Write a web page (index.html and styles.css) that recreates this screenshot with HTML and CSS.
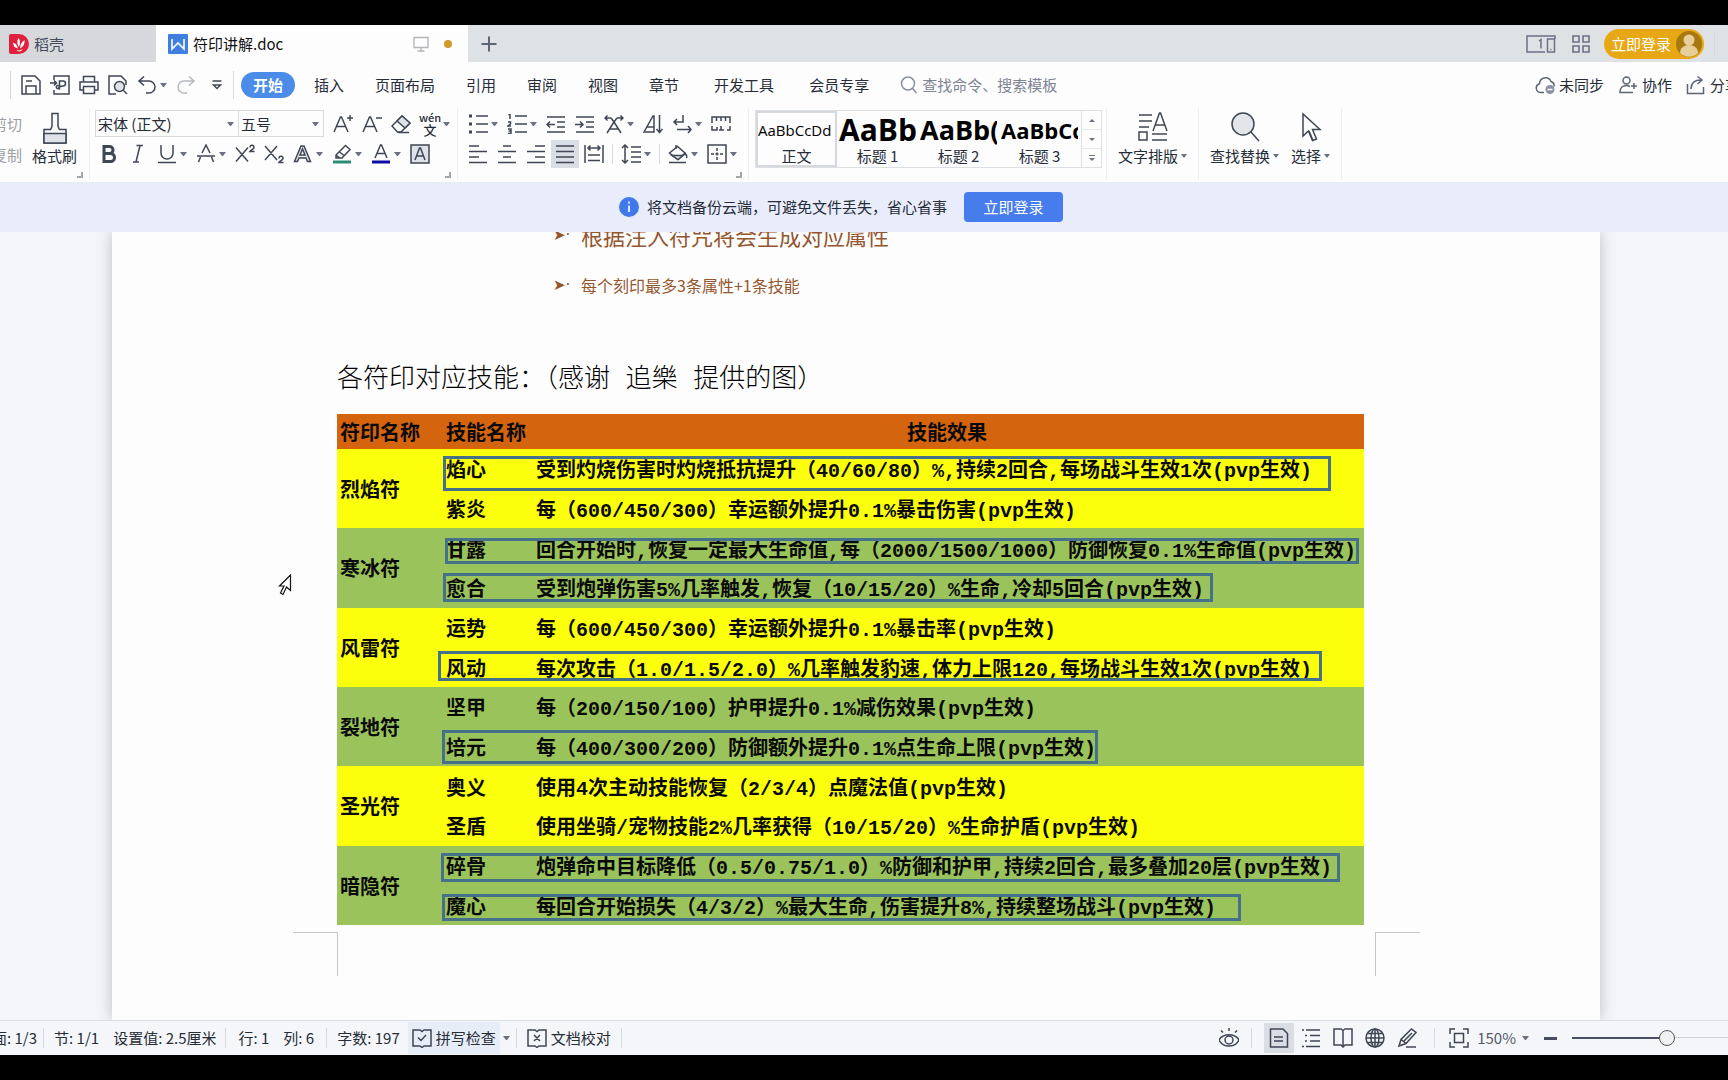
FILE: index.html
```html
<!DOCTYPE html>
<html lang="zh-CN">
<head>
<meta charset="utf-8">
<title>符印讲解.doc</title>
<meta name="viewport" content="width=device-width, initial-scale=1">
<link rel="stylesheet" href="styles.css">
</head>
<body>
<div class="app">

  <header class="tabbar">
    <button class="tab tab-home" type="button">
      <svg class="i20" viewBox="0 0 20 20"><path d="M0 2q0-2 2-2h8a10 10 0 0 1 0 20H2q-2 0-2-2z" fill="#e0203c"/><path d="M9.500 4c2 2.500 2 6 .2 9C8 10 7.800 6.500 9.500 4zM15.500 6c.5 4-1.500 7-4.500 8.500 0-3.500 1.500-6.500 4.500-8.500zM4 8.500c2.500.8 4.300 2.800 4.800 6C6 14 4.200 12 4 8.500zM7.500 16c2 .8 4.500.4 6.500-1-1.500 2.500-5 3.500-6.500 1z" fill="#fff"/></svg>
      <span>稻壳</span>
    </button>
    <button class="tab tab-doc" type="button">
      <svg class="i20" viewBox="0 0 20 20"><rect width="20" height="20" rx="1" fill="#3f7fe0"/><path d="M4 5v10l6-6 6 6V5" fill="none" stroke="#fff" stroke-width="1.600"/></svg>
      <span class="tab-name">符印讲解.doc</span>
      <svg class="i16" viewBox="0 0 16 16" fill="none" stroke="#b4b6bb" stroke-width="1.400"><path d="M1 1.500h14v10H1zM8 11.500v3M4.500 15h7"/></svg>
      <i class="dot"></i>
    </button>
    <button class="plain add" type="button" aria-label="新建"><svg class="i16" viewBox="0 0 16 16"><path d="M8 .5v15M.5 8h15"/></svg></button>
    <div class="tabbar-end">
      <svg width="30" height="18" viewBox="0 0 30 18" fill="none" stroke="#6b7286" stroke-width="1.500"><path d="M19 17H1V1h28v3M28.500 4h-7v13h7zM24.500 14.500h1M13 6l2-1.500v9"/></svg>
      <svg class="i18" viewBox="0 0 18 18" fill="none" stroke="#6b7286" stroke-width="1.600"><path d="M1 1h6v6H1zM11 1h6v6h-6zM1 11h6v6H1zM11 11h6v6h-6z"/></svg>
      <button class="login-pill" type="button">立即登录
        <svg width="26" height="26" viewBox="0 0 26 26"><circle cx="13" cy="13" r="13" fill="#a8780c"/><circle cx="13" cy="9" r="5.500" fill="#e6cf9a"/><path d="M4 22c0-5 4-8 9-8s9 3 9 8c-5 5-13 5-18 0z" fill="#e6cf9a"/></svg>
      </button>
      <i class="vline"></i>
    </div>
  </header>

  <nav class="menubar">
    <i class="vline v28"></i>
    <div class="quick">
      <button class="plain" aria-label="保存"><svg class="i20" viewBox="0 0 20 20"><path d="M1 1h13l5 5v13H1zM5 19v-8h10v8M5 6h6"/></svg></button>
      <button class="plain" aria-label="输出为PDF"><svg class="i20" viewBox="0 0 20 20"><path d="M4 5V1h15v18H4v-4M0 8h6M4 5.500 6.500 8 4 10.500M9.500 14.500V6H13a2.500 2.500 0 0 1 0 5c-3 0-4 1-4.500 2.500a1.600 1.600 0 1 1 1-1.500"/></svg></button>
      <button class="plain" aria-label="打印"><svg class="i20" viewBox="0 0 20 20"><path d="M4.500 7V1.500h11V7M4.500 15H1V7h18v8h-3.500M4.500 11.500h11v7h-11z"/></svg></button>
      <button class="plain" aria-label="打印预览"><svg class="i20" viewBox="0 0 20 20"><path d="M8 19H1V1h12l5 5v4"/><circle cx="11.500" cy="11.500" r="5" fill="#dfe2e8"/><path d="m15 15 4 4"/></svg></button>
      <button class="plain split" aria-label="撤消"><svg class="i20" viewBox="0 0 20 20"><path d="M7 1.500 2 6l5 4.500M2.500 6H12a6 6 0 0 1 0 12H9"/></svg></button>
      <button class="plain pale" aria-label="恢复"><svg class="i20" viewBox="0 0 20 20"><path d="m13 1.500 5 4.500-5 4.500M17.500 6H8a6 6 0 0 0 0 12h3"/></svg></button>
      <button class="plain" aria-label="自定义快速访问"><svg class="i20" viewBox="0 0 20 20"><path d="M5.500 6h9M6.500 10l3.500 3.500 3.500-3.500z"/></svg></button>
    </div>
    <i class="vline v28"></i>
    <button class="menu current" type="button">开始</button>
    <div class="menus">
      <button class="menu" type="button">插入</button>
      <button class="menu" type="button">页面布局</button>
      <button class="menu" type="button">引用</button>
      <button class="menu" type="button">审阅</button>
      <button class="menu" type="button">视图</button>
      <button class="menu" type="button">章节</button>
      <button class="menu wide" type="button">开发工具</button>
      <button class="menu wide" type="button">会员专享</button>
    </div>
    <label class="search">
      <svg class="i18" viewBox="0 0 18 18"><circle cx="8" cy="7.500" r="6.500"/><path d="m12.500 12.500 4 4.500"/></svg>
      <input type="text" placeholder="查找命令、搜索模板" aria-label="查找命令、搜索模板">
    </label>
    <div class="menubar-end">
      <button class="plain act"><svg class="i20" viewBox="0 0 20 20"><path d="M9 17.500H5.500a4.500 4.500 0 0 1-1-8.800A6 6 0 0 1 16 6.500a4.500 4.500 0 0 1 3 5"/><circle cx="15" cy="14.500" r="4.500" fill="#8b90a3" stroke="none"/><path d="M12.500 14.500h5" stroke="#fff"/></svg>未同步</button>
      <button class="plain act"><svg class="i20" viewBox="0 0 20 20"><circle cx="8.500" cy="5.500" r="3.500"/><path d="M12 11.500c-4-2-10-1-10 6h13M13 11h6M16 8v6"/></svg>协作</button>
      <button class="plain act"><svg class="i20" viewBox="0 0 20 20"><path d="M1.500 9v9.500h16V12M5 14c0-6 4-9 10-9M11.500 1.500 16 5l-4.500 4"/></svg>分享</button>
    </div>
  </nav>

  <section class="ribbon">
    <div class="group clip">
      <div class="clip-words"><button class="plain">剪切</button><button class="plain">复制</button></div>
      <button class="plain big"><svg width="24" height="32" viewBox="0 0 24 32"><path d="M9 1.500h6v13l1.500 3H23V31H1V17.500h6.500l1.500-3z"/><path d="M1 21.500h22V31H1z" fill="#dfe2e8"/></svg>格式刷</button>
      <i class="corner"></i>
    </div>

    <div class="group font">
      <div class="row">
        <div class="fontbox">
          <button class="combo combo-face" type="button">宋体 (正文)</button>
          <button class="combo combo-size" type="button">五号</button>
        </div>
        <button class="plain" aria-label="增大字号"><svg class="i20" viewBox="0 0 20 20"><path d="M1 18 7.500 3h1L15 18M3.500 12.500h9M14 4h6M17 1v6"/></svg></button>
        <button class="plain" aria-label="减小字号"><svg class="i20" viewBox="0 0 20 20"><path d="M1 18 7.500 3h1L15 18M3.500 12.500h9M14 4h6"/></svg></button>
        <button class="plain" aria-label="清除格式"><svg class="i20" viewBox="0 0 20 20"><path d="m1 12 10-10 8 7-9 9H6.500z"/><path d="m6 7 5-5 8 7-5 5z" fill="#dfe2e8"/><path d="M7 18.500h11"/></svg></button>
        <button class="plain split pinyin" aria-label="拼音指南"><span><small>wén</small><b>文</b></span></button>
      </div>
      <div class="row">
        <button class="plain" aria-label="加粗"><svg class="i20" viewBox="0 0 20 20"><path d="M5 2.500h5.500a3.500 3.500 0 0 1 0 7H5zM5 9.500h6.500a4 4 0 0 1 0 8H5z" stroke-width="3"/></svg></button>
        <button class="plain" aria-label="倾斜"><svg class="i20" viewBox="0 0 20 20"><path d="M8.500 1.500H15M5 18h6M12 1.500 8 18"/></svg></button>
        <button class="plain split" aria-label="下划线"><svg class="i20" viewBox="0 0 20 20"><path d="M4 1v8a6 6 0 0 0 12 0V1M1 18.500h18"/></svg></button>
        <button class="plain split" aria-label="删除线"><svg class="i20" viewBox="0 0 20 20"><path d="M6 9l4-8 4 8M1 12h18M4.500 13 2.500 18M15.500 13l2 5"/></svg></button>
        <button class="plain" aria-label="上标"><svg class="i20" viewBox="0 0 20 20"><path d="M1 3.500 13 17.500M13 3.500 1 17.500M15 3.500c0-3.500 4.500-2.500 4 .2C18.800 5 16 6 15 7.500h4.500"/></svg></button>
        <button class="plain" aria-label="下标"><svg class="i20" viewBox="0 0 20 20"><path d="M1 2 13 16M13 2 1 16M15 14.500c0-3.500 4.500-2.500 4 .2-.2 1.300-3 2.300-4 3.800h4.500"/></svg></button>
        <button class="plain split" aria-label="文字效果"><svg class="i20" viewBox="0 0 20 20"><path d="M1.500 17.500 8 2h3l6.500 15.500h-3L13 14H6l-1.500 3.500zM7 11h5L9.500 5z" fill="#e3e5ea"/></svg></button>
        <button class="plain split" aria-label="突出显示"><svg class="i20" viewBox="0 0 20 20"><path d="m4 11 9.500-9.500 4.500 4L10 14H4zM7.500 8l5 4M4 11l4 3"/><path d="M1 18h18" stroke="#2d8a78" stroke-width="3"/></svg></button>
        <button class="plain split" aria-label="字体颜色"><svg class="i20" viewBox="0 0 20 20"><path d="M4 14 9.500 1h1L16 14M6 9.500h8"/><path d="M1 18h18" stroke="#0c0ca8" stroke-width="3"/></svg></button>
        <button class="plain" aria-label="字符底纹"><svg class="i20" viewBox="0 0 20 20"><path d="M1 1h18v18H1z" fill="#dfe2e8"/><path d="m5 16 4.500-12h1L15 16M6.500 12h7"/></svg></button>
      </div>
      <i class="corner"></i>
    </div>

    <div class="group para">
      <div class="row">
        <button class="plain split" aria-label="项目符号"><svg class="i20" viewBox="0 0 20 20"><path d="M8 2h12M8 10h12M8 18h12"/><path d="M1 2h3M1 10h3M1 18h3" stroke-width="3"/></svg></button>
        <button class="plain split" aria-label="编号"><svg class="i20" viewBox="0 0 20 20"><path d="M8 2h12M8 10h12M8 18h12M1.500 1 3 0v5M1 8h2.500v2L1 12h3M1 15h3v4.500H1M1.500 17H4"/></svg></button>
        <button class="plain" aria-label="减少缩进"><svg class="i20" viewBox="0 0 20 20"><path d="M1 3h18M11 8h8M11 13h8M1 18h18M1 10.500h8M4 7.500l-3 3 3 3"/></svg></button>
        <button class="plain" aria-label="增加缩进"><svg class="i20" viewBox="0 0 20 20"><path d="M1 3h18M11 8h8M11 13h8M1 18h18M0 10.500h8M5 7.500l3 3-3 3"/></svg></button>
        <button class="plain split" aria-label="中文版式"><svg class="i20" viewBox="0 0 20 20"><path d="m3 19 7-11 7 11M5.500 15h9M1 4h6M3.500 1.500 1 4l2.500 2.500M19 4h-6M16.500 1.500 19 4l-2.500 2.500M7 4l3 4 3-4"/></svg></button>
        <button class="plain" aria-label="排序"><svg class="i20" viewBox="0 0 20 20"><path d="M1 18 10 2h1v16zM4 13h7M16.500 1v17M13.500 15l3 3.500 3-3.500"/></svg></button>
        <button class="plain split" aria-label="显示标记"><svg class="i20" viewBox="0 0 20 20"><path d="M11 1v7H2M5 5 2 8l3 3M5 15.500h14M16 12l3 3.500-3 3.500"/></svg></button>
        <button class="plain" aria-label="制表位"><svg class="i20" viewBox="0 0 20 20"><path d="M1 9V3h18v6M5.500 3v4M10 3v4M14.500 3v4M1 12v4h5v-3M10 16v-4M8 16h5M16 16h3v-4"/></svg></button>
      </div>
      <div class="row">
        <button class="plain" aria-label="左对齐"><svg class="i20" viewBox="0 0 20 20"><path d="M1 2h10M1 7.500h18M1 13h10M1 18.500h18"/></svg></button>
        <button class="plain" aria-label="居中"><svg class="i20" viewBox="0 0 20 20"><path d="M6 2h8M1 7.500h18M6 13h8M1 18.500h18"/></svg></button>
        <button class="plain" aria-label="右对齐"><svg class="i20" viewBox="0 0 20 20"><path d="M9 2h10M1 7.500h18M9 13h10M1 18.500h18"/></svg></button>
        <button class="plain on" aria-label="两端对齐"><svg class="i20" viewBox="0 0 20 20"><path d="M1 2h18M1 7.500h18M1 13h18M1 18.500h18"/></svg></button>
        <button class="plain" aria-label="分散对齐"><svg class="i20" viewBox="0 0 20 20"><path d="M1 1v18M19 1v18M4 4h12M6.500 1.500 4 4l2.500 2.500M13.500 1.500 16 4l-2.500 2.500M4 11h12M4 16.500h12"/></svg></button>
        <i class="vline v20"></i>
        <button class="plain split" aria-label="行距"><svg class="i20" viewBox="0 0 20 20"><path d="M4 1v18M1 4l3-3 3 3M1 16l3 3 3-3M10 3h10M10 8h10M10 13h10M10 18h10"/></svg></button>
        <i class="vline v20"></i>
        <button class="plain split" aria-label="底纹颜色"><svg class="i20" viewBox="0 0 20 20"><path d="M8 1v4M1.500 9 9.500 2.500 17 9l-7 6.500zM17 9c2 3 2.500 4 1 5"/><path d="M4 11.500h11L10 15.500z" fill="#dfe2e8"/><path d="M1 18.500h17"/></svg></button>
        <button class="plain split" aria-label="边框"><svg class="i20" viewBox="0 0 20 20"><path d="M1 1h18v18H1z"/><path d="M10 4v12M4 10h12" stroke-dasharray="3 1.500"/></svg></button>
      </div>
      <i class="corner"></i>
    </div>

    <div class="group styles">
      <div class="gallery">
        <button class="style picked" type="button"><span class="sample s15">AaBbCcDd</span><span>正文</span></button>
        <button class="style" type="button"><span class="sample s30">AaBb</span><span>标题 1</span></button>
        <button class="style" type="button"><span class="sample s27">AaBb(</span><span>标题 2</span></button>
        <button class="style" type="button"><span class="sample s22">AaBbCc</span><span>标题 3</span></button>
        <div class="gallery-nav">
          <button class="plain up" aria-label="上一行"></button>
          <button class="plain down" aria-label="下一行"></button>
          <button class="plain down more" aria-label="更多样式"></button>
        </div>
      </div>
    </div>

    <div class="group layout">
      <button class="plain big drop"><svg width="30" height="30" viewBox="0 0 30 30"><path d="M1 3h13M1 9h13M1 15h10M15 19 21.500 1h1L29 19M17 13h10M1 20h8v8H1zM14 22h15M14 28h15"/></svg><span>文字排版</span></button>
    </div>
    <div class="group find">
      <button class="plain big drop"><svg width="30" height="30" viewBox="0 0 30 30"><circle cx="13" cy="12" r="11" fill="#e3e5ea"/><path d="m21 20 8 9"/></svg><span>查找替换</span></button>
      <button class="plain big drop"><svg width="30" height="30" viewBox="0 0 30 30"><path d="M7 2v22l5.500-5 4 9.500 4-1.500-4-9.500H24z"/><path d="m13 19 4 9.500"/></svg><span>选择</span></button>
    </div>
  </section>

  <aside class="notice">
    <svg class="i20" viewBox="0 0 20 20"><circle cx="10" cy="10" r="10" fill="#4179ea"/><path d="M10 8.500V15M10 4.500v2" stroke="#fff" stroke-width="1.600"/></svg>
    <span>将文档备份云端，可避免文件丢失，省心省事</span>
    <button type="button">立即登录</button>
  </aside>

  <main class="canvas">
    <article class="page">
      <ul class="points">
        <li class="large">根据注入符咒将会生成对应属性</li>
        <li>每个刻印最多3条属性+1条技能</li>
      </ul>
      <h1>各符印对应技能：（感谢 追樂 提供的图）</h1>
      <div class="chart">
        <table>
          <colgroup><col class="c1"><col class="c2"><col></colgroup>
          <thead><tr><th>符印名称</th><th>技能名称</th><th class="mid">技能效果</th></tr></thead>
          <tbody>
            <tr class="y"><th rowspan="2">烈焰符</th><td>焰心</td><td>受到灼烧伤害时灼烧抵抗提升（40/60/80）%,持续2回合,每场战斗生效1次(pvp生效)</td></tr>
            <tr class="y"><td>紫炎</td><td>每（600/450/300）幸运额外提升0.1%暴击伤害(pvp生效)</td></tr>
            <tr class="g"><th rowspan="2">寒冰符</th><td>甘露</td><td>回合开始时,恢复一定最大生命值,每（2000/1500/1000）防御恢复0.1%生命值(pvp生效)</td></tr>
            <tr class="g"><td>愈合</td><td>受到炮弹伤害5%几率触发,恢复（10/15/20）%生命,冷却5回合(pvp生效)</td></tr>
            <tr class="y"><th rowspan="2">风雷符</th><td>运势</td><td>每（600/450/300）幸运额外提升0.1%暴击率(pvp生效)</td></tr>
            <tr class="y"><td>风动</td><td>每次攻击（1.0/1.5/2.0）%几率触发豹速,体力上限120,每场战斗生效1次(pvp生效)</td></tr>
            <tr class="g"><th rowspan="2">裂地符</th><td>坚甲</td><td>每（200/150/100）护甲提升0.1%减伤效果(pvp生效)</td></tr>
            <tr class="g"><td>培元</td><td>每（400/300/200）防御额外提升0.1%点生命上限(pvp生效)</td></tr>
            <tr class="y"><th rowspan="2">圣光符</th><td>奥义</td><td>使用4次主动技能恢复（2/3/4）点魔法值(pvp生效)</td></tr>
            <tr class="y"><td>圣盾</td><td>使用坐骑/宠物技能2%几率获得（10/15/20）%生命护盾(pvp生效)</td></tr>
            <tr class="g"><th rowspan="2">暗隐符</th><td>碎骨</td><td>炮弹命中目标降低（0.5/0.75/1.0）%防御和护甲,持续2回合,最多叠加20层(pvp生效)</td></tr>
            <tr class="g"><td>魔心</td><td>每回合开始损失（4/3/2）%最大生命,伤害提升8%,持续整场战斗(pvp生效)</td></tr>
          </tbody>
        </table>
        <i class="mark m-yanxin"></i><i class="mark m-ganlu"></i><i class="mark m-yuhe"></i><i class="mark m-fengdong"></i><i class="mark m-peiyuan"></i><i class="mark m-suigu"></i><i class="mark m-moxin"></i>
      </div>
      <div class="crops"><i></i><i></i></div>
    </article>
    <svg class="pointer" width="14" height="22" viewBox="0 0 14 22"><path d="M12.500 1v15.500L8.500 13 5 20.500 2.500 19 6 12H1.500z" fill="#fff" stroke="#111" stroke-width="1.200"/></svg>
  </main>

  <footer class="status">
    <div class="status-words">
      <span class="w-page">页面: 1/3</span><i class="vline v20"></i>
      <span class="w-sec">节: 1/1</span><span class="w-set">设置值: 2.5厘米</span><i class="vline v20"></i>
      <span class="w-row">行: 1</span><span class="w-col">列: 6</span><i class="vline v20"></i>
      <span class="w-count">字数: 197</span>
      <button class="plain proof spell"><svg class="i20" viewBox="0 0 20 20"><path d="M1 2h7l2 1.500L12 2h7v16h-7l-2 1.500L8 18H1zM6 9.500l3 3L14 7"/></svg>拼写检查</button>
      <i class="caret"></i><i class="vline v20"></i>
      <button class="plain proof"><svg class="i20" viewBox="0 0 20 20"><path d="M1 2h7l2 1.500L12 2h7v16h-7l-2 1.500L8 18H1zM7 7l6 6M13 7l-6 6"/></svg>文档校对</button>
      <i class="vline v20"></i>
    </div>
    <div class="status-tools">
      <button class="plain" aria-label="护眼模式"><svg class="i20" viewBox="0 0 20 20"><path d="M0 12c4-7 16-7 20 0-4 8-16 8-20 0zM10 0v3M2 2.500l2 2M18 2.500l-2 2"/><circle cx="10" cy="12" r="4"/></svg></button>
      <i class="vline v20"></i>
      <div class="views">
        <button class="plain on" aria-label="页面视图"><svg class="i20" viewBox="0 0 20 20"><path d="M1.500 1H14l4.500 4.500V19h-17zM5 9h9M5 13h9"/></svg></button>
        <button class="plain" aria-label="大纲"><svg class="i20" viewBox="0 0 20 20"><path d="M5 2h14M9 7.500h10M9 13h10M5 18.500h14M1 2h2M4 7.500h2M4 13h2M1 18.500h2"/></svg></button>
        <button class="plain" aria-label="阅读版式"><svg class="i20" viewBox="0 0 20 20"><path d="M1 1h7l2 1.500V19l-2-2H1zM19 1h-7l-2 1.500V19l2-2h7z"/></svg></button>
        <button class="plain" aria-label="Web版式"><svg class="i20" viewBox="0 0 20 20"><circle cx="10" cy="10" r="9"/><ellipse cx="10" cy="10" rx="4" ry="9"/><path d="M1 10h18M2.500 5.500h15M2.500 14.500h15M10 1v18"/></svg></button>
        <button class="plain" aria-label="写作模式"><svg class="i20" viewBox="0 0 20 20"><path d="M2 18 4 11.500 14.500 1l4.500 3.500L9 15.500zM4 11.500 8.500 15M6.500 13.500 15 5M9 19h10"/></svg></button>
      </div>
      <i class="vline v20 after-views"></i>
      <button class="plain" aria-label="最佳显示比例"><svg class="i20" viewBox="0 0 20 20"><path d="M6 1H1v5M14 1h5v5M6 19H1v-5M14 19h5v-5M5.500 5.500h9v9h-9z"/></svg></button>
      <button class="plain zoomlevel split">150%</button>
      <button class="plain minus" aria-label="缩小"></button>
      <input class="zoom" type="range" min="0" max="200" value="93" aria-label="显示比例">
    </div>
  </footer>
</div>
</body>
</html>
```
FILE: styles.css
```css
*, *::before, *::after { box-sizing: border-box; }
body {
  margin: 0;
  background: #000;
  color: #262c38;
  font: 15px/20px "Noto Sans CJK SC", "Noto Sans", sans-serif;
}
.app {
  height: 100vh;
  padding: 25px 0;
  display: flex;
  flex-direction: column;
  overflow: hidden;
}
.app > * { flex: none; }
button, input { font: inherit; color: inherit; }
button { border: 0; background: none; padding: 0; white-space: nowrap; }
svg { display: block; flex: none; }
.plain svg, .search svg { fill: none; stroke: #3f4654; stroke-width: 1.5; }
.i16 { width: 16px; height: 16px; }
.i18 { width: 18px; height: 18px; }
.i20 { width: 20px; height: 20px; }
.vline { flex: none; width: 1px; height: 24px; background: #d5d8dd; }
.v20 { height: 20px; }
.v28 { height: 28px; }

/* document tabs */
.tabbar { display: flex; height: 37px; background: #dfe2e4; }
.tab { display: flex; align-items: center; gap: 5px; }
.tab-home { width: 156px; padding-left: 9px; background: #d7d8dc; color: #454c60; }
.tab-doc { width: 312px; padding: 0 16px 0 12px; background: #fdfdfe; color: #111; }
.tab-name { flex: 1; text-align: left; }
.dot { width: 8px; height: 8px; margin-left: 10px; border-radius: 50%; background: #cf9a28; }
.add { padding: 0 13px; }
.add svg { stroke: #5c6475; stroke-width: 2; }
.tabbar-end { display: flex; align-items: center; gap: 16px; margin-left: auto; padding-right: 13px; }
.login-pill {
  display: flex; align-items: center; gap: 5px;
  height: 30px; padding: 0 2px 0 7px; margin: 0 -6px 0 -2px;
  border-radius: 15px; background: #e8a714; color: #fff;
}

/* menu row */
.menubar { display: flex; align-items: center; height: 46px; padding-left: 10px; background: #fdfdfe; }
.quick { display: flex; gap: 9px; padding: 0 6px 0 10px; }
.quick .plain:last-child { margin-left: 2px; }
.pale svg { stroke: #b4b8c0; }
.menu { color: #262c38; }
.current { height: 26px; padding: 0 12px; margin: 0 19px 0 7px; border-radius: 13px; background: #4a8ce8; color: #fff; font-weight: 700; }
.menus { display: flex; gap: 31px; }
.wide { margin-left: 4px; }
.search { display: flex; align-items: center; gap: 4px; margin-left: 31px; color: #7d8494; }
.search svg { stroke: #8a90a0; }
.search input { width: 150px; padding: 0; border: 0; background: none; }
.search input::placeholder { color: #7d8494; opacity: 1; }
.menubar-end { display: flex; gap: 14px; margin-left: auto; margin-right: -12px; }
.act { display: flex; gap: 4px; }
.act svg { stroke: #5d6474; }

/* ribbon */
.ribbon { display: flex; height: 74px; background: #fdfdfe; overflow: hidden; }
.group { flex: none; display: flex; flex-direction: column; gap: 3px; position: relative; height: 72px; padding-top: 2px; border-right: 1px solid #eceef1; }
.row { display: flex; align-items: center; gap: 9px; height: 27px; }
.split { display: flex; align-items: center; }
.split::after, .caret, .combo::after {
  content: ""; flex: none; width: 7px; margin-left: 3px;
  border: solid transparent; border-width: 4px 3px 0; border-top-color: #6b7180;
}
.corner { position: absolute; right: 6px; bottom: 2px; width: 6px; height: 6px; border: solid #a3a6ac; border-width: 0 2px 2px 0; }
.clip { flex-direction: row; gap: 10px; width: 90px; }
.clip-words { display: flex; flex-direction: column; gap: 11px; padding-top: 4px; margin-left: -8px; color: #9b9ea5; }
.big { display: flex; flex-direction: column; align-items: center; gap: 2px; padding-top: 2px; }
.drop { gap: 4px; }
.drop span::after { content: ""; display: inline-block; margin: 0 0 4px 3px; border: solid transparent; border-width: 4px 3px 0; border-top-color: #6b7180; }
.font { width: 368px; padding-left: 9px; }
.font .row:first-child { margin-left: -4px; }
.fontbox { display: flex; width: 229px; height: 27px; border: 1px solid #d5d8dd; }
.combo { display: flex; align-items: center; justify-content: space-between; padding: 0 4px 0 2px; }
.combo-face { flex: 1; }
.combo-size { width: 85px; border-left: 1px solid #d5d8dd; }
.pinyin span { display: flex; flex-direction: column; align-items: center; width: 20px; }
.pinyin small { font-size: 11px; line-height: 12px; font-weight: 500; }
.pinyin b { font-size: 13px; line-height: 14px; font-weight: 500; }
.para { width: 291px; padding-left: 10px; }
.para .vline { margin: 0 -1px; }
.on { background: #d9dde4; }
.para .on { padding: 4px; margin: 0 -4px; }
.styles { width: 358px; padding-left: 6px; }
.gallery { display: flex; width: 347px; height: 58px; border: 1px solid #dddfe3; }
.style { display: flex; flex-direction: column; align-items: center; width: 81px; padding: 0 2px; overflow: hidden; }
.style > span:last-child { margin-top: -2px; }
.picked { border: 2px solid #d5d8dd; }
.picked .sample { margin-top: -2px; }
.sample { flex: none; display: block; width: 77px; height: 37px; overflow: hidden; text-align: left; color: #000; line-height: 38px; font-family: "Open Sans", "Noto Sans", sans-serif; font-weight: 700; }
.s15 { font-size: 15px; font-weight: 400; }
.s30 { font-size: 30px; }
.s27 { font-size: 27px; }
.s22 { font-size: 22px; }
.gallery-nav { display: flex; flex-direction: column; width: 20px; margin-left: auto; border-left: 1px solid #dddfe3; }
.gallery-nav button { flex: 1; display: flex; flex-direction: column; align-items: center; justify-content: center; gap: 2px; }
.gallery-nav button + button { border-top: 1px solid #e6e8eb; }
.up::after, .down::after { content: ""; border: solid transparent; border-width: 0 3px 3px; border-bottom-color: #6b7180; }
.down::after { border-width: 3px 3px 0; border-top-color: #6b7180; }
.more::before { content: ""; width: 6px; height: 1px; background: #6b7180; }
.layout { width: 92px; padding-left: 11px; align-items: flex-start; }
.find { flex-direction: row; gap: 12px; width: 143px; padding-left: 11px; align-items: flex-start; }

/* cloud backup notice */
.notice { display: flex; align-items: center; justify-content: center; gap: 8px; height: 50px; padding-right: 46px; background: #e9edfb; }
.notice button { width: 99px; height: 30px; margin-left: 9px; border-radius: 4px; background: #477cec; color: #fff; }

/* document */
.app > .canvas { flex: 1 1 0; min-height: 0; position: relative; overflow: hidden; padding: 0 128px 0 112px; background: #f4f5f9; }
.page { display: flow-root; min-height: 100%; padding: 0 236px 0 225px; background: #fdfdfe; box-shadow: 0 0 14px #b9bec4; }
.points { display: flex; flex-direction: column; gap: 18px; list-style: none; margin: -13px 0 0; padding: 0 0 0 216px; color: #94562f; }
.points li { display: flex; align-items: center; gap: 12px; height: 32px; font-size: 16px; }
.points li::before { content: "➤·"; width: 16px; white-space: nowrap; font: 15px/20px "DejaVu Sans", sans-serif; }
.points .large { font-size: 22px; }
h1 { margin: 59px 0 14px; color: #000; font: 300 26px/40px "Liberation Mono", "Noto Sans CJK SC", monospace; white-space: nowrap; }
.chart { position: relative; }
table { width: 100%; height: 511px; table-layout: fixed; border-collapse: collapse; color: #0a0a0a; font: 700 20px/24px "Liberation Mono", "Noto Sans CJK SC", monospace; }
.c1 { width: 106px; }
.c2 { width: 90px; }
th, td { padding: 7px 0 0 3px; text-align: left; font-weight: 700; white-space: nowrap; }
thead th { height: 35px; }
thead { background: #d5640e; }
thead .mid { padding: 7px 3px 0 0; text-align: center; }
.y { background: #fcff0c; }
.g { background: #9bc35b; }
.mark { position: absolute; border: 3px solid #46718a; }
.m-yanxin { left: 106px; top: 42px; width: 888px; height: 35px; }
.m-ganlu { left: 108px; top: 124px; width: 914px; height: 26px; }
.m-yuhe { left: 106px; top: 159px; width: 770px; height: 29px; }
.m-fengdong { left: 101px; top: 237px; width: 884px; height: 30px; }
.m-peiyuan { left: 105px; top: 316px; width: 656px; height: 34px; }
.m-suigu { left: 104px; top: 439px; width: 899px; height: 29px; }
.m-moxin { left: 105px; top: 480px; width: 799px; height: 27px; }
.crops { display: flex; justify-content: space-between; margin: 7px -56px 0 -44px; }
.crops i { width: 45px; height: 44px; border: solid #c4c6c9; border-width: 1px 1px 0 0; }
.crops i + i { border-width: 1px 0 0 1px; }
.pointer { position: absolute; left: 278px; top: 342px; }

/* status bar */
.status { display: flex; align-items: center; justify-content: space-between; height: 35px; background: #f4f6f9; border-top: 1px solid #dcdfe2; }
.status-words, .status-tools, .views { display: flex; align-items: center; white-space: nowrap; }
.w-page { margin: 0 6px 0 -23px; }
.w-sec { margin-left: 10px; }
.w-set { margin: 0 9px 0 14px; }
.w-row { margin-left: 12px; }
.w-col { margin: 0 12px 0 14px; }
.w-count { margin: 0 8px 0 10px; }
.proof { display: flex; align-items: center; gap: 4px; height: 32px; padding: 0 10px; }
.spell { padding: 0 4px; background: #e6edf7; }
.status .caret { margin: 0 6px 0 3px; }
.status-tools { gap: 12px; }
.views { gap: 2px; }
.views .plain { padding: 5px; }
.after-views { margin-right: 2px; }
.zoomlevel { margin-left: -4px; color: #555b68; }
.zoomlevel::after { margin-left: 6px; }
.minus { width: 13px; height: 3px; margin: 0 3px; background: #484c63; }
.zoom { appearance: none; width: 204px; height: 16px; margin: 0 -48px 0 0; background: linear-gradient(#484c63, #484c63) 0 7px / 95px 2px no-repeat, linear-gradient(#cfd2d8, #cfd2d8) 0 7px / 100% 1px no-repeat; }
.zoom::-webkit-slider-thumb { appearance: none; width: 16px; height: 16px; border: 1px solid #555; border-radius: 50%; background: #f0f1f3; }
```
